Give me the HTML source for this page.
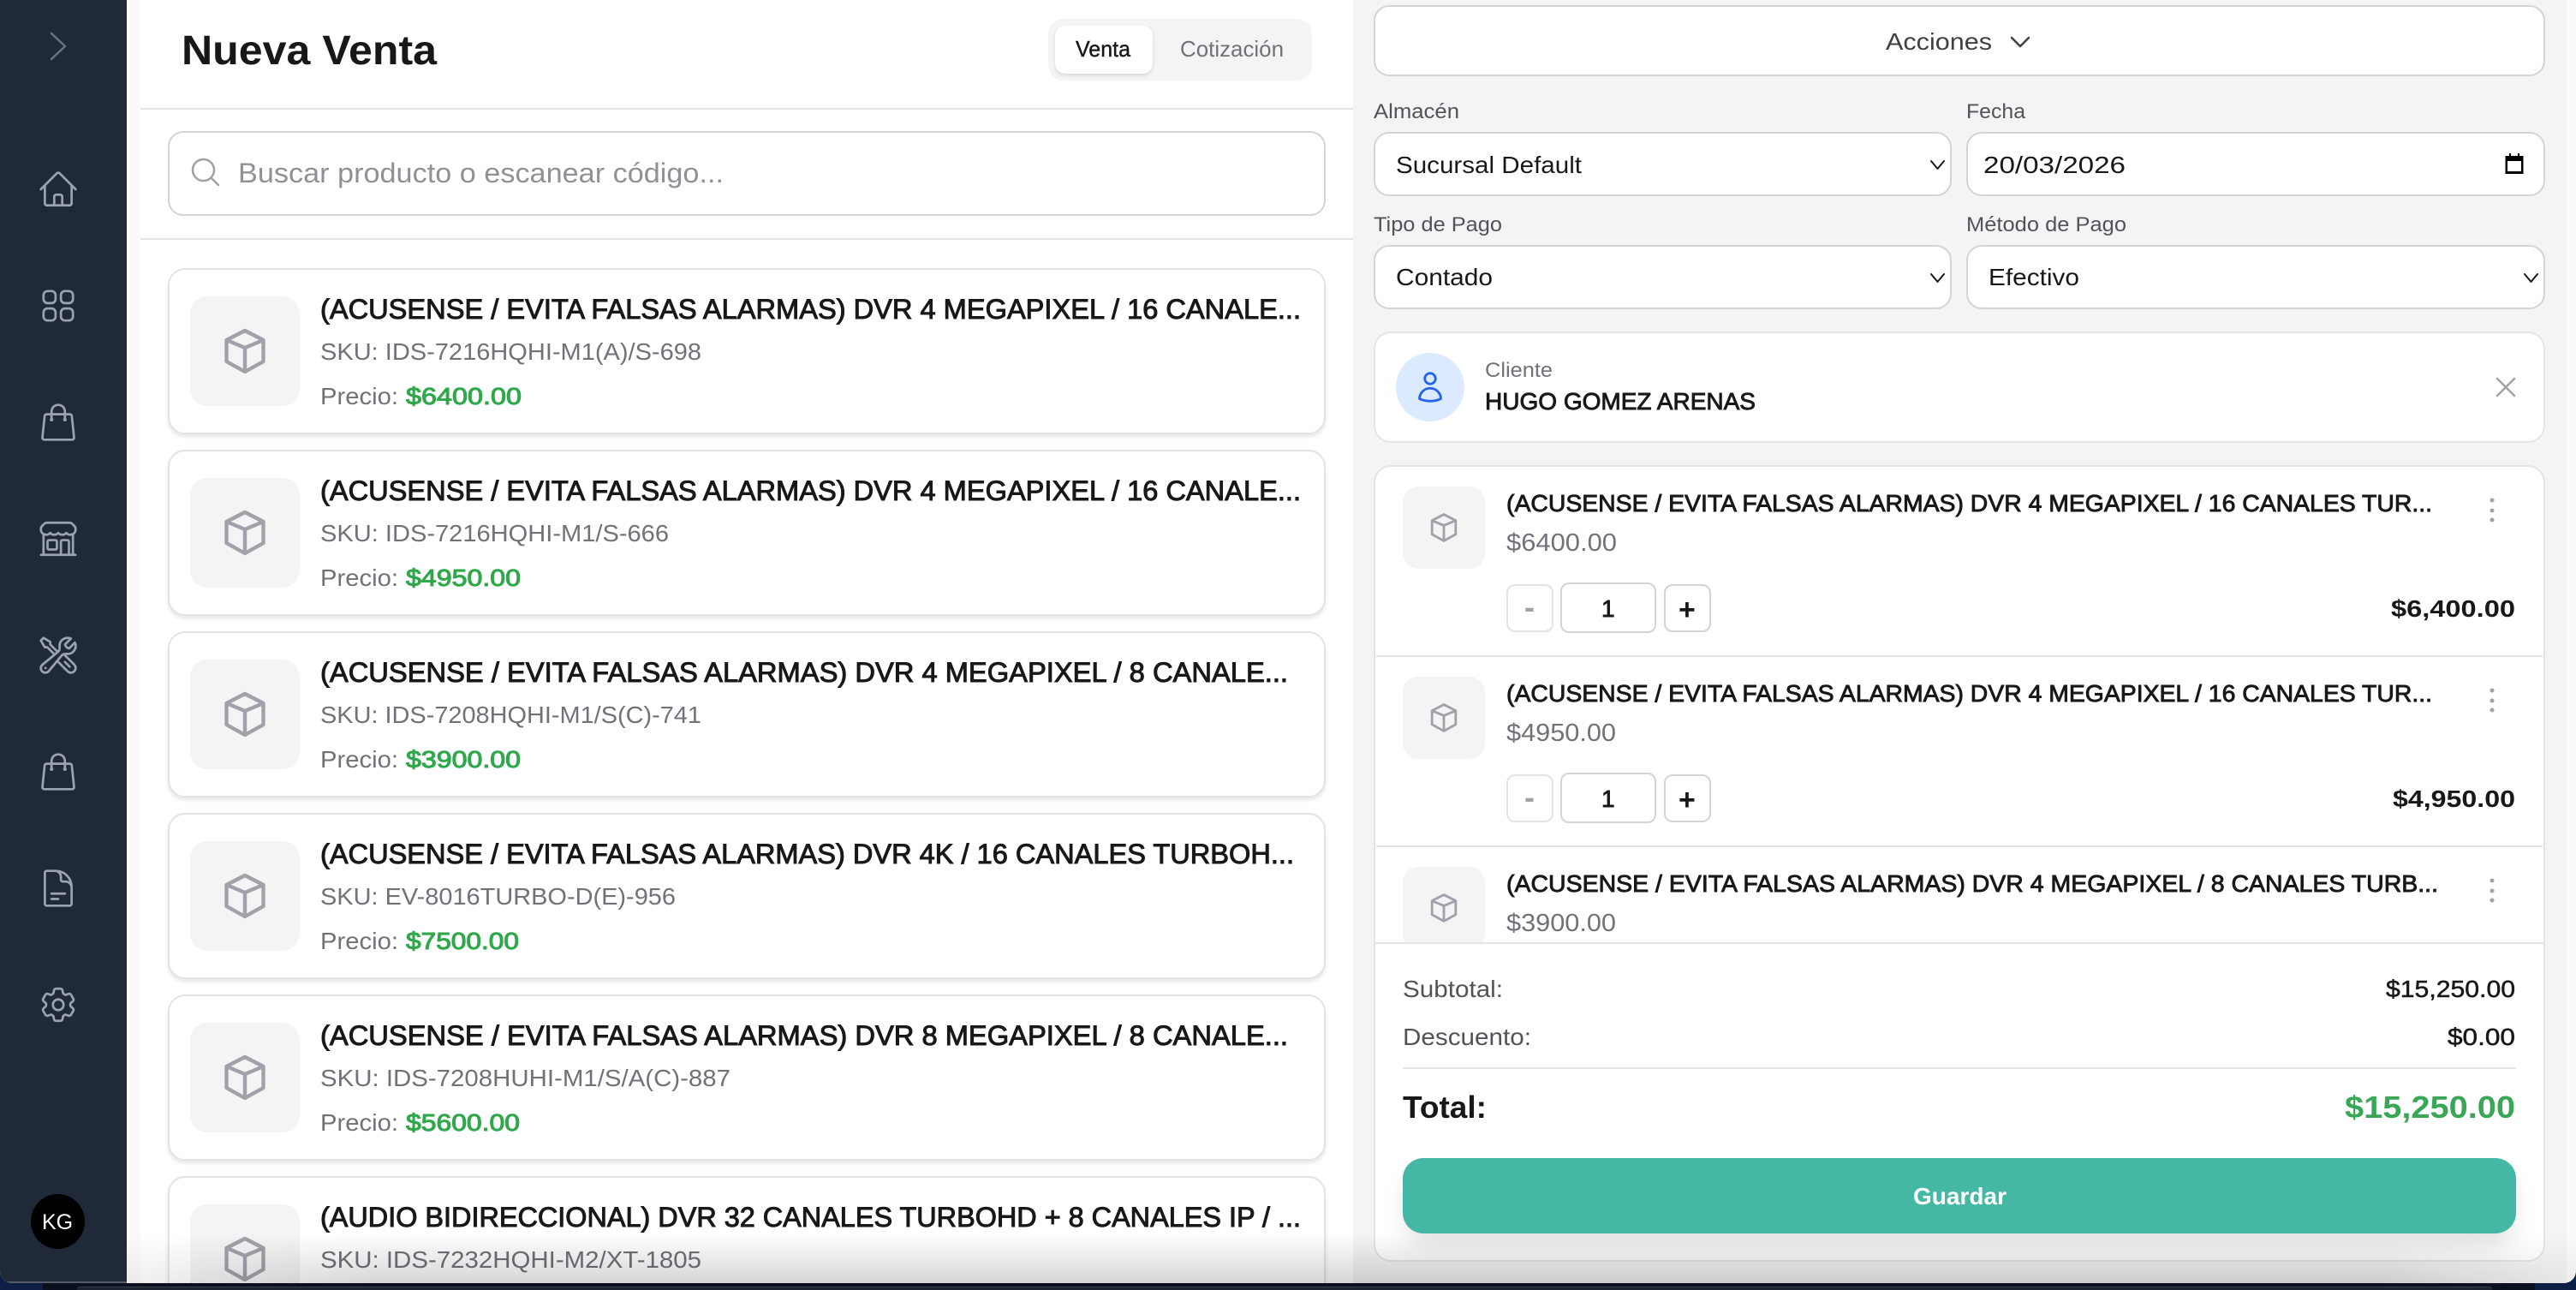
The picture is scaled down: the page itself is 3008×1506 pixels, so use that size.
<!DOCTYPE html>
<html lang="es"><head><meta charset="utf-8"><title>Nueva Venta</title>
<style>
html,body{margin:0;padding:0;width:3008px;height:1506px;overflow:hidden;background:#0e1f45}
#w{position:absolute;left:0;top:0;width:3008px;height:1498px;overflow:hidden;border-radius:0 0 14px 14px;background:#fafafa}
#w div{position:absolute;box-sizing:border-box}
.card{left:196px;width:1352px;height:194px;background:#fff;border:2px solid #e4e4e7;border-radius:20px;box-shadow:0 3px 5px rgba(0,0,0,.1)}
.th{left:222px;width:128px;height:128px;background:#f4f4f5;border-radius:20px}
.ts{left:1638px;width:96px;height:96px;background:#f4f4f5;border-radius:18px}
.f{height:75px;background:#fff;border:2px solid #d4d4d8;border-radius:18px}
.l{left:1607px;width:1362px;height:2px;background:#e4e4e7}
.q{width:55px;height:56px;background:#fff;border:2px solid #d4d4d8;border-radius:10px}
svg{position:absolute;left:0;top:0}
text{font-family:"Liberation Sans",Arial,sans-serif}
.t1{font-size:48px;font-weight:700;fill:#18181b}
.n{font-size:32px;fill:#18181b;stroke:#18181b;stroke-width:1}
.s{font-size:28px;fill:#71717a}
.p{font-size:28px;fill:#71717a}
.g{font-size:28px;fill:#2fa84a;stroke:#2fa84a;stroke-width:1}
.lb{font-size:24px;fill:#52525b}
.v{font-size:28px;fill:#18181b}
.m{font-size:28px;fill:#18181b;stroke:#18181b;stroke-width:.9}
.b{font-size:28px;font-weight:700;fill:#18181b}
.i{fill:none;stroke:#9ca3af;stroke-width:1.3;stroke-linecap:round;stroke-linejoin:round}
.c{fill:none;stroke:#a1a1aa;stroke-width:4.4;stroke-linecap:round;stroke-linejoin:round}
</style></head><body>
<div style="position:absolute;left:50px;top:1498px;width:2910px;height:8px;background:#0a101e"></div>
<div style="position:absolute;left:90px;top:1502px;width:2820px;height:4px;background:#1c2330;border-top:1px solid #3a4048;border-radius:10px 10px 0 0;box-sizing:border-box"></div>
<div id="w">
<div style="left:0;top:0;width:148px;height:1498px;background:#1f2937;border-bottom:2px solid #565c67"></div>
<div style="left:164px;top:0;width:1416px;height:1498px;background:#fff"></div>
<div style="left:1580px;top:0;width:1417px;height:1498px;background:#f4f4f5"></div>
<div style="left:164px;top:126px;width:1416px;height:2px;background:#e4e4e7"></div>
<div style="left:164px;top:278px;width:1416px;height:2px;background:#e4e4e7"></div>
<div style="left:1224px;top:22px;width:308px;height:72px;background:#f4f4f5;border-radius:18px"></div>
<div style="left:1232px;top:30px;width:114px;height:56px;background:#fff;border-radius:12px;box-shadow:0 2px 4px rgba(0,0,0,.12)"></div>
<div style="left:196px;top:153px;width:1352px;height:99px;background:#fff;border:2px solid #d4d4d8;border-radius:18px"></div>

<div class="card" style="top:313px"></div><div class="th" style="top:346px"></div>
<div class="card" style="top:525px"></div><div class="th" style="top:558px"></div>
<div class="card" style="top:737px"></div><div class="th" style="top:770px"></div>
<div class="card" style="top:949px"></div><div class="th" style="top:982px"></div>
<div class="card" style="top:1161px"></div><div class="th" style="top:1194px"></div>
<div class="card" style="top:1373px"></div><div class="th" style="top:1406px"></div>

<div class="f" style="left:1604px;top:6px;width:1368px;height:83px"></div>
<div class="f" style="left:1604px;top:154px;width:675px"></div>
<div class="f" style="left:2296px;top:154px;width:676px"></div>
<div class="f" style="left:1604px;top:286px;width:675px"></div>
<div class="f" style="left:2296px;top:286px;width:676px"></div>

<div style="left:1604px;top:387px;width:1368px;height:130px;background:#fff;border:2px solid #e4e4e7;border-radius:20px"></div>
<div style="left:1630px;top:412px;width:80px;height:80px;background:#dbeafe;border-radius:50%"></div>

<div style="left:1604px;top:543px;width:1368px;height:930px;background:#fff;border:2px solid #e4e4e7;border-radius:20px"></div>
<div class="ts" style="top:568px"></div>
<div class="l" style="top:765px"></div>
<div class="ts" style="top:790px"></div>
<div class="l" style="top:987px"></div>
<div class="ts" style="top:1012px"></div>
<div class="q" style="left:1759px;top:682px;border-color:#e4e4e7"></div>
<div class="q" style="left:1822px;top:680px;width:112px;height:59px;border-radius:10px"></div>
<div class="q" style="left:1943px;top:682px"></div>
<div class="q" style="left:1759px;top:904px;border-color:#e4e4e7"></div>
<div class="q" style="left:1822px;top:902px;width:112px;height:59px;border-radius:10px"></div>
<div class="q" style="left:1943px;top:904px"></div>

<div style="left:1606px;top:1100px;width:1364px;height:371px;background:#fff;border-top:2px solid #e4e4e7;border-radius:0 0 18px 18px"></div>
<div style="left:1638px;top:1246px;width:1300px;height:2px;background:#e4e4e7"></div>
<div style="left:1638px;top:1352px;width:1300px;height:88px;background:#44b8a5;border-radius:24px;box-shadow:0 18px 30px -6px rgba(0,0,0,.13)"></div>
<div style="left:36px;top:1394px;width:63px;height:64px;background:#000;border-radius:50%"></div>

<svg width="3008" height="1498" viewBox="0 0 3008 1498" xmlns="http://www.w3.org/2000/svg">
<defs>
<symbol id="cube" viewBox="0 0 56 56"><path class="c" d="M28 4 49.500 15V40L28 52 6.500 40V15ZM6.500 15 28 24 49.500 15M28 24V52"/></symbol>
<symbol id="bag" viewBox="0 0 24 24"><path class="i" d="M15.75 10.5V6a3.75 3.75 0 1 0-7.5 0v4.5m11.356-1.993 1.263 12c.07.665-.45 1.243-1.119 1.243H4.25a1.125 1.125 0 0 1-1.12-1.243l1.264-12A1.125 1.125 0 0 1 5.513 7.5h12.974c.576 0 1.059.435 1.119 1.007ZM8.625 10.5a.375.375 0 1 1-.75 0 .375.375 0 0 1 .75 0Zm7.5 0a.375.375 0 1 1-.75 0 .375.375 0 0 1 .75 0Z"/></symbol>
</defs>

<!-- sidebar -->
<path d="M60 39 76 54 60 69" fill="none" stroke="#6b7280" stroke-width="2.5" stroke-linecap="round" stroke-linejoin="round"/>
<svg x="43" y="196" width="50" height="50" viewBox="0 0 24 24"><path class="i" d="m2.25 12 8.954-8.955c.44-.439 1.152-.439 1.591 0L21.75 12M4.5 9.75v10.125c0 .621.504 1.125 1.125 1.125H9.750v-4.875c0-.621.504-1.125 1.125-1.125h2.25c.621 0 1.125.504 1.125 1.125V21h4.125c.621 0 1.125-.504 1.125-1.125V9.75M8.25 21h8.25"/></svg>
<svg x="43" y="332" width="50" height="50" viewBox="0 0 24 24"><path class="i" d="M3.75 6A2.25 2.25 0 0 1 6 3.75h2.25A2.25 2.25 0 0 1 10.5 6v2.25a2.25 2.25 0 0 1-2.25 2.25H6a2.25 2.25 0 0 1-2.25-2.25V6ZM3.75 15.75A2.25 2.25 0 0 1 6 13.5h2.25a2.25 2.25 0 0 1 2.25 2.25V18a2.25 2.25 0 0 1-2.25 2.25H6A2.25 2.25 0 0 1 3.75 18v-2.25ZM13.5 6a2.25 2.25 0 0 1 2.25-2.25H18A2.25 2.25 0 0 1 20.25 6v2.25A2.25 2.25 0 0 1 18 10.5h-2.25a2.25 2.25 0 0 1-2.25-2.25V6ZM13.5 15.75a2.25 2.25 0 0 1 2.25-2.25H18a2.25 2.25 0 0 1 2.25 2.25V18A2.25 2.25 0 0 1 18 20.25h-2.25A2.25 2.25 0 0 1 13.5 18v-2.25Z"/></svg>
<use href="#bag" x="43" y="468" width="50" height="50"/>
<svg x="43" y="604" width="50" height="50" viewBox="0 0 24 24"><path class="i" d="M13.5 21v-7.5a.75.75 0 0 1 .75-.75h3a.75.75 0 0 1 .75.75V21m-4.5 0H2.36m11.14 0H18m0 0h3.64m-1.39 0V9.349M3.75 21V9.349m0 0a3.001 3.001 0 0 0 3.75-.615A2.993 2.993 0 0 0 9.75 9.75c.896 0 1.7-.393 2.25-1.016a2.993 2.993 0 0 0 2.25 1.016c.896 0 1.7-.393 2.25-1.016a3.001 3.001 0 0 0 3.75.614m-16.5 0a3.004 3.004 0 0 1-.621-4.72l1.189-1.19A1.5 1.5 0 0 1 5.378 3h13.243a1.5 1.5 0 0 1 1.06.44l1.19 1.189a3 3 0 0 1-.621 4.72M6.75 18h3.75a.75.75 0 0 0 .75-.75V13.5a.75.75 0 0 0-.75-.75H6.75a.75.75 0 0 0-.75.75v3.75c0 .414.336.75.75.75Z"/></svg>
<svg x="43" y="740" width="50" height="50" viewBox="0 0 24 24"><path class="i" d="M11.42 15.17 17.25 21A2.652 2.652 0 0 0 21 17.25l-5.877-5.877M11.42 15.17l2.496-3.03c.317-.384.74-.626 1.208-.766M11.42 15.17l-4.655 5.653a2.548 2.548 0 1 1-3.586-3.586l6.837-5.63m5.108-.233c.55-.164 1.163-.188 1.743-.14a4.5 4.5 0 0 0 4.486-6.336l-3.276 3.277a3.004 3.004 0 0 1-2.25-2.25l3.276-3.276a4.5 4.5 0 0 0-6.336 4.486c.091 1.076-.071 2.264-.904 2.95l-.102.085m-1.745 1.437L5.909 7.5H4.5L2.25 3.75l1.5-1.5L7.5 4.5v1.409l4.26 4.26m-1.745 1.437 1.745-1.437m6.615 8.206L15.75 15.75M4.867 19.125h.008v.008h-.008v-.008Z"/></svg>
<use href="#bag" x="43" y="876" width="50" height="50"/>
<svg x="43" y="1012" width="50" height="50" viewBox="0 0 24 24"><path class="i" d="M19.5 14.25v-2.625a3.375 3.375 0 0 0-3.375-3.375h-1.5A1.125 1.125 0 0 1 13.5 7.125v-1.5a3.375 3.375 0 0 0-3.375-3.375H8.25m0 12.75h7.5m-7.5 3H12M10.5 2.25H5.625c-.621 0-1.125.504-1.125 1.125v17.25c0 .621.504 1.125 1.125 1.125h12.75c.621 0 1.125-.504 1.125-1.125V11.25a9 9 0 0 0-9-9Z"/></svg>
<svg x="43" y="1148" width="50" height="50" viewBox="0 0 24 24"><path class="i" d="M9.594 3.94c.09-.542.56-.94 1.11-.94h2.593c.55 0 1.02.398 1.11.94l.213 1.281c.063.374.313.686.645.87.074.04.147.083.22.127.325.196.72.257 1.075.124l1.217-.456a1.125 1.125 0 0 1 1.37.49l1.296 2.247a1.125 1.125 0 0 1-.26 1.431l-1.003.827c-.293.241-.438.613-.43.992a7.723 7.723 0 0 1 0 .255c-.008.378.137.75.43.991l1.004.827c.424.35.534.955.26 1.43l-1.298 2.247a1.125 1.125 0 0 1-1.369.491l-1.217-.456c-.355-.133-.75-.072-1.076.124a6.47 6.47 0 0 1-.22.128c-.331.183-.581.495-.644.869l-.213 1.281c-.09.543-.56.94-1.11.94h-2.594c-.55 0-1.019-.398-1.11-.94l-.213-1.281c-.062-.374-.312-.686-.644-.87a6.52 6.52 0 0 1-.22-.127c-.325-.196-.72-.257-1.076-.124l-1.217.456a1.125 1.125 0 0 1-1.369-.49l-1.297-2.247a1.125 1.125 0 0 1 .26-1.431l1.004-.827c.292-.24.437-.613.43-.991a6.932 6.932 0 0 1 0-.255c.007-.38-.138-.751-.43-.992l-1.004-.827a1.125 1.125 0 0 1-.26-1.43l1.297-2.247a1.125 1.125 0 0 1 1.37-.491l1.216.456c.356.133.751.072 1.076-.124.072-.044.146-.086.22-.128.332-.183.582-.495.644-.869l.214-1.28ZM15 12a3 3 0 1 1-6 0 3 3 0 0 1 6 0Z"/></svg>
<text x="49" y="1435" style="font-size:25px;fill:#fff">KG</text>

<!-- header -->
<text class="t1" x="212" y="75" textLength="298" lengthAdjust="spacingAndGlyphs">Nueva Venta</text>
<text x="1256" y="66" textLength="64" lengthAdjust="spacingAndGlyphs" style="font-size:26px;fill:#18181b;stroke:#18181b;stroke-width:.4">Venta</text>
<text x="1378" y="66" textLength="121" lengthAdjust="spacingAndGlyphs" style="font-size:26px;fill:#71717a">Cotización</text>
<svg x="220" y="181" width="40" height="40" viewBox="0 0 24 24"><path d="m21 21-5.197-5.197m0 0A7.5 7.5 0 1 0 5.196 5.196a7.5 7.5 0 0 0 10.607 10.607Z" fill="none" stroke="#a1a1aa" stroke-width="1.5" stroke-linecap="round" stroke-linejoin="round"/></svg>
<text x="278" y="213" textLength="567" lengthAdjust="spacingAndGlyphs" style="font-size:32px;fill:#8f9198">Buscar producto o escanear código...</text>

<!-- product list -->
<use href="#cube" x="258" y="382" width="56" height="56"/>
<text class="n" x="374" y="372" textLength="1145" lengthAdjust="spacingAndGlyphs">(ACUSENSE / EVITA FALSAS ALARMAS) DVR 4 MEGAPIXEL / 16 CANALE...</text>
<text class="s" x="374" y="420" textLength="445" lengthAdjust="spacingAndGlyphs">SKU: IDS-7216HQHI-M1(A)/S-698</text>
<text class="p" x="374" y="472" textLength="91" lengthAdjust="spacingAndGlyphs">Precio:</text><text class="g" x="474" y="472" textLength="135" lengthAdjust="spacingAndGlyphs">$6400.00</text>

<use href="#cube" x="258" y="594" width="56" height="56"/>
<text class="n" x="374" y="584" textLength="1145" lengthAdjust="spacingAndGlyphs">(ACUSENSE / EVITA FALSAS ALARMAS) DVR 4 MEGAPIXEL / 16 CANALE...</text>
<text class="s" x="374" y="632" textLength="407" lengthAdjust="spacingAndGlyphs">SKU: IDS-7216HQHI-M1/S-666</text>
<text class="p" x="374" y="684" textLength="91" lengthAdjust="spacingAndGlyphs">Precio:</text><text class="g" x="474" y="684" textLength="134" lengthAdjust="spacingAndGlyphs">$4950.00</text>

<use href="#cube" x="258" y="806" width="56" height="56"/>
<text class="n" x="374" y="796" textLength="1130" lengthAdjust="spacingAndGlyphs">(ACUSENSE / EVITA FALSAS ALARMAS) DVR 4 MEGAPIXEL / 8 CANALE...</text>
<text class="s" x="374" y="844" textLength="445" lengthAdjust="spacingAndGlyphs">SKU: IDS-7208HQHI-M1/S(C)-741</text>
<text class="p" x="374" y="896" textLength="91" lengthAdjust="spacingAndGlyphs">Precio:</text><text class="g" x="474" y="896" textLength="134" lengthAdjust="spacingAndGlyphs">$3900.00</text>

<use href="#cube" x="258" y="1018" width="56" height="56"/>
<text class="n" x="374" y="1008" textLength="1137" lengthAdjust="spacingAndGlyphs">(ACUSENSE / EVITA FALSAS ALARMAS) DVR 4K / 16 CANALES TURBOH...</text>
<text class="s" x="374" y="1056" textLength="415" lengthAdjust="spacingAndGlyphs">SKU: EV-8016TURBO-D(E)-956</text>
<text class="p" x="374" y="1108" textLength="91" lengthAdjust="spacingAndGlyphs">Precio:</text><text class="g" x="474" y="1108" textLength="132" lengthAdjust="spacingAndGlyphs">$7500.00</text>

<use href="#cube" x="258" y="1230" width="56" height="56"/>
<text class="n" x="374" y="1220" textLength="1130" lengthAdjust="spacingAndGlyphs">(ACUSENSE / EVITA FALSAS ALARMAS) DVR 8 MEGAPIXEL / 8 CANALE...</text>
<text class="s" x="374" y="1268" textLength="479" lengthAdjust="spacingAndGlyphs">SKU: IDS-7208HUHI-M1/S/A(C)-887</text>
<text class="p" x="374" y="1320" textLength="91" lengthAdjust="spacingAndGlyphs">Precio:</text><text class="g" x="474" y="1320" textLength="133" lengthAdjust="spacingAndGlyphs">$5600.00</text>

<use href="#cube" x="258" y="1442" width="56" height="56"/>
<text class="n" x="374" y="1432" textLength="1145" lengthAdjust="spacingAndGlyphs">(AUDIO BIDIRECCIONAL) DVR 32 CANALES TURBOHD + 8 CANALES IP / ...</text>
<text class="s" x="374" y="1480" textLength="445" lengthAdjust="spacingAndGlyphs">SKU: IDS-7232HQHI-M2/XT-1805</text>

<!-- right top -->
<text x="2202" y="58" textLength="124" lengthAdjust="spacingAndGlyphs" style="font-size:28px;fill:#3f3f46">Acciones</text>
<path d="M2349 44 2359 54 2369 44" fill="none" stroke="#3f3f46" stroke-width="2.5" stroke-linecap="round" stroke-linejoin="round"/>
<text class="lb" x="1604" y="138" textLength="100" lengthAdjust="spacingAndGlyphs">Almacén</text>
<text class="lb" x="2296" y="138" textLength="69" lengthAdjust="spacingAndGlyphs">Fecha</text>
<text class="lb" x="1604" y="270" textLength="150" lengthAdjust="spacingAndGlyphs">Tipo de Pago</text>
<text class="lb" x="2296" y="270" textLength="187" lengthAdjust="spacingAndGlyphs">Método de Pago</text>
<text class="v" x="1630" y="202" textLength="217" lengthAdjust="spacingAndGlyphs">Sucursal Default</text>
<text class="v" x="2316" y="202" textLength="166" lengthAdjust="spacingAndGlyphs">20/03/2026</text>
<text class="v" x="1630" y="333" textLength="113" lengthAdjust="spacingAndGlyphs">Contado</text>
<text class="v" x="2322" y="333" textLength="106" lengthAdjust="spacingAndGlyphs">Efectivo</text>
<g fill="none" stroke="#18181b" stroke-width="2" stroke-linecap="round" stroke-linejoin="round">
<path d="M2255 188 2262.500 197 2270 188"/>
<path d="M2255 320 2262.500 329 2270 320"/>
<path d="M2948 320 2955.500 329 2963 320"/>
</g>
<path d="M2930 179h2v3h8v-3h2v3h4.500v21h-21v-21h4.500zM2928 188v12h16v-12z" fill="#000" fill-rule="evenodd"/>

<!-- client -->
<svg x="1650" y="432" width="40" height="40" viewBox="0 0 24 24"><path d="M15.750 6a3.750 3.750 0 1 1-7.500 0 3.750 3.750 0 0 1 7.500 0ZM4.501 20.118a7.500 7.500 0 0 1 14.998 0A17.933 17.933 0 0 1 12 21.750c-2.676 0-5.216-.584-7.499-1.632Z" fill="none" stroke="#2563eb" stroke-width="1.7" stroke-linecap="round" stroke-linejoin="round"/></svg>
<text x="1734" y="440" textLength="79" lengthAdjust="spacingAndGlyphs" style="font-size:24px;fill:#71717a">Cliente</text>
<text class="m" x="1734" y="478" textLength="316" lengthAdjust="spacingAndGlyphs">HUGO GOMEZ ARENAS</text>
<path d="M2916 442 2936 462M2936 442 2916 462" fill="none" stroke="#a1a1aa" stroke-width="2.500" stroke-linecap="round"/>

<!-- items -->
<use href="#cube" x="1668" y="598" width="36" height="36"/>
<text class="m" x="1759" y="597" textLength="1081" lengthAdjust="spacingAndGlyphs">(ACUSENSE / EVITA FALSAS ALARMAS) DVR 4 MEGAPIXEL / 16 CANALES TUR...</text>
<text class="p" x="1759" y="643" textLength="129" lengthAdjust="spacingAndGlyphs" style="font-size:29px">$6400.00</text>
<g fill="#a1a1aa"><circle cx="2910" cy="584" r="2.500"/><circle cx="2910" cy="596" r="2.500"/><circle cx="2910" cy="607" r="2.500"/></g>
<text x="1780" y="721" style="font-size:36px;font-weight:700;fill:#a1a1aa">-</text>
<text class="m" x="1870" y="720">1</text>
<text x="1960" y="723" style="font-size:34px;font-weight:700;fill:#18181b">+</text>
<text class="b" x="2792" y="720" textLength="145" lengthAdjust="spacingAndGlyphs">$6,400.00</text>

<use href="#cube" x="1668" y="820" width="36" height="36"/>
<text class="m" x="1759" y="819" textLength="1081" lengthAdjust="spacingAndGlyphs">(ACUSENSE / EVITA FALSAS ALARMAS) DVR 4 MEGAPIXEL / 16 CANALES TUR...</text>
<text class="p" x="1759" y="865" textLength="128" lengthAdjust="spacingAndGlyphs" style="font-size:29px">$4950.00</text>
<g fill="#a1a1aa"><circle cx="2910" cy="806" r="2.500"/><circle cx="2910" cy="818" r="2.500"/><circle cx="2910" cy="829" r="2.500"/></g>
<text x="1780" y="943" style="font-size:36px;font-weight:700;fill:#a1a1aa">-</text>
<text class="m" x="1870" y="942">1</text>
<text x="1960" y="945" style="font-size:34px;font-weight:700;fill:#18181b">+</text>
<text class="b" x="2794" y="942" textLength="143" lengthAdjust="spacingAndGlyphs">$4,950.00</text>

<use href="#cube" x="1668" y="1042" width="36" height="36"/>
<text class="m" x="1759" y="1041" textLength="1088" lengthAdjust="spacingAndGlyphs">(ACUSENSE / EVITA FALSAS ALARMAS) DVR 4 MEGAPIXEL / 8 CANALES TURB...</text>
<text class="p" x="1759" y="1087" textLength="128" lengthAdjust="spacingAndGlyphs" style="font-size:29px">$3900.00</text>
<g fill="#a1a1aa"><circle cx="2910" cy="1028" r="2.500"/><circle cx="2910" cy="1040" r="2.500"/><circle cx="2910" cy="1051" r="2.500"/></g>

<!-- totals -->
<text x="1638" y="1164" textLength="117" lengthAdjust="spacingAndGlyphs" style="font-size:28px;fill:#52525b">Subtotal:</text>
<text x="1638" y="1220" textLength="150" lengthAdjust="spacingAndGlyphs" style="font-size:28px;fill:#52525b">Descuento:</text>
<text class="m" x="2786" y="1164" textLength="151" lengthAdjust="spacingAndGlyphs" style="stroke-width:.5">$15,250.00</text>
<text class="m" x="2858" y="1220" textLength="79" lengthAdjust="spacingAndGlyphs" style="stroke-width:.5">$0.00</text>
<text x="1638" y="1305" textLength="98" lengthAdjust="spacingAndGlyphs" style="font-size:36px;font-weight:700;fill:#18181b">Total:</text>
<text x="2738" y="1305" textLength="199" lengthAdjust="spacingAndGlyphs" style="font-size:36px;font-weight:700;fill:#3aa757">$15,250.00</text>
<text x="2234" y="1406" textLength="109" lengthAdjust="spacingAndGlyphs" style="font-size:28px;font-weight:700;fill:#fff">Guardar</text>
</svg>

<div style="left:148px;top:1440px;width:2860px;height:58px;background:linear-gradient(rgba(0,0,0,0),rgba(0,0,0,.16));-webkit-mask-image:linear-gradient(to right,rgba(0,0,0,.35),#000 10%,#000 92%,rgba(0,0,0,.3))"></div>
</div>
</body></html>
